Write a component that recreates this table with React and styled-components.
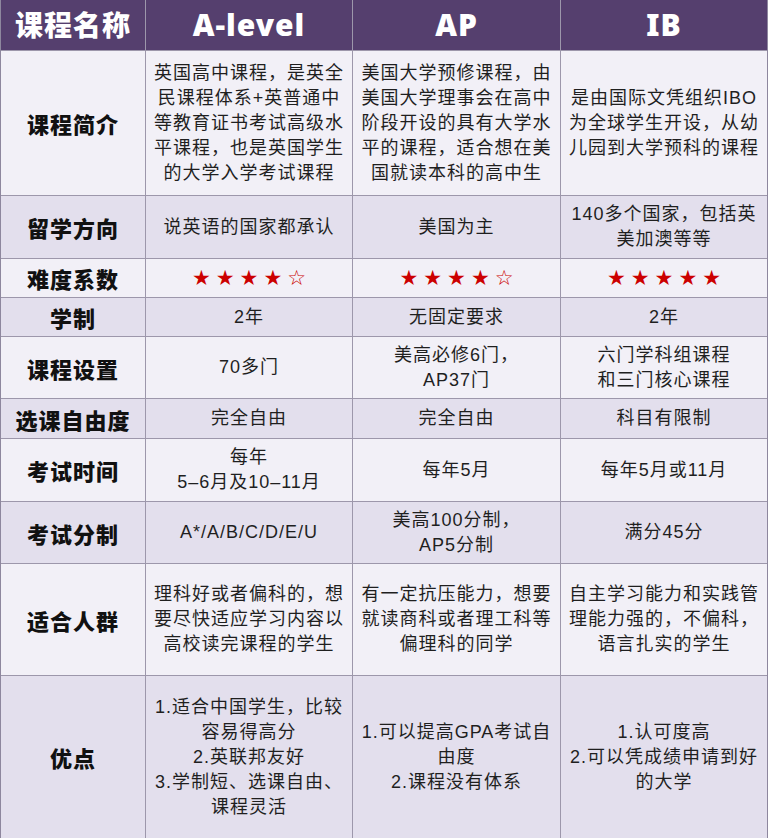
import React from "react";
import styled, { createGlobalStyle } from "styled-components";

const GlobalStyle = createGlobalStyle`
  html, body {
    margin: 0;
    padding: 0;
    background: #ffffff;
  }
  body {
    font-family: "Liberation Sans", "Noto Sans CJK SC", sans-serif;
  }
`;

const rows = [
  {
    label: "课程简介",
    height: 145,
    tone: "light",
    cells: [
      ["英国高中课程，是英全", "民课程体系+英普通中", "等教育证书考试高级水", "平课程，也是英国学生", "的大学入学考试课程"],
      ["美国大学预修课程，由", "美国大学理事会在高中", "阶段开设的具有大学水", "平的课程，适合想在美", "国就读本科的高中生"],
      ["是由国际文凭组织IBO", "为全球学生开设，从幼", "儿园到大学预科的课程"],
    ],
  },
  {
    label: "留学方向",
    height: 63,
    tone: "dark",
    cells: [["说英语的国家都承认"], ["美国为主"], ["140多个国家，包括英", "美加澳等等"]],
  },
  { label: "难度系数", height: 39, tone: "light", stars: [4, 4, 5] },
  { label: "学制", height: 39, tone: "dark", cells: [["2年"], ["无固定要求"], ["2年"]] },
  {
    label: "课程设置",
    height: 62,
    tone: "light",
    cells: [["70多门"], ["美高必修6门，", "AP37门"], ["六门学科组课程", "和三门核心课程"]],
  },
  { label: "选课自由度", height: 40, tone: "dark", cells: [["完全自由"], ["完全自由"], ["科目有限制"]] },
  {
    label: "考试时间",
    height: 63,
    tone: "light",
    cells: [["每年", "5–6月及10–11月"], ["每年5月"], ["每年5月或11月"]],
  },
  {
    label: "考试分制",
    height: 62,
    tone: "dark",
    cells: [["A*/A/B/C/D/E/U"], ["美高100分制，", "AP5分制"], ["满分45分"]],
  },
  {
    label: "适合人群",
    height: 112,
    tone: "light",
    cells: [
      ["理科好或者偏科的，想", "要尽快适应学习内容以", "高校读完课程的学生"],
      ["有一定抗压能力，想要", "就读商科或者理工科等", "偏理科的同学"],
      ["自主学习能力和实践管", "理能力强的，不偏科，", "语言扎实的学生"],
    ],
  },
  {
    label: "优点",
    height: 163,
    tone: "dark",
    cells: [
      ["1.适合中国学生，比较", "容易得高分", "2.英联邦友好", "3.学制短、选课自由、", "课程灵活"],
      ["1.可以提高GPA考试自", "由度", "2.课程没有体系"],
      ["1.认可度高", "2.可以凭成绩申请到好", "的大学"],
    ],
  },
];

const Page = styled.div`
  width: 768px;
  height: 838px;
  overflow: hidden;
  background: #ffffff;
`;

const Table = styled.div`
  display: grid;
  width: 766px;
  grid-template-columns: 144px 206px 207px 206px;
  grid-template-rows: 50px ${(p) => p.$rows};
  column-gap: 1px;
  row-gap: 1px;
  background: #9d97ab;
  border-left: 1px solid #8e879e;
  border-right: 1px solid #8e879e;
`;

const HeadCell = styled.div`
  display: flex;
  align-items: center;
  justify-content: center;
  background: #553f6e;
  color: #ffffff;
  font-family: "Noto Sans", "Noto Sans CJK SC", sans-serif;
  font-weight: 900;
  font-size: ${(p) => (p.$cjk ? "28px" : "30px")};
  letter-spacing: 1px;
  padding-bottom: 2px;
`;

const LabelCell = styled.div`
  display: flex;
  align-items: center;
  justify-content: center;
  background: ${(p) => (p.$tone === "dark" ? "#e3dfed" : "#f2f0f7")};
  color: #111111;
  font-family: "Noto Sans CJK SC", sans-serif;
  font-weight: 900;
  font-size: 22px;
  letter-spacing: 1px;
`;

const Cell = styled.div`
  display: flex;
  flex-direction: column;
  align-items: center;
  justify-content: center;
  background: ${(p) => (p.$tone === "dark" ? "#e3dfed" : "#f2f0f7")};
  color: #1f1f1f;
  font-family: "Liberation Sans", "Noto Sans CJK SC", sans-serif;
  font-size: 18px;
  line-height: 25px;
  letter-spacing: 1px;
`;

const Line = styled.span`
  white-space: nowrap;
`;

const Stars = styled.span`
  font-family: "DejaVu Sans", sans-serif;
  font-size: 21px;
  letter-spacing: 5px;
  color: #cc0000;
  white-space: nowrap;
  margin-right: -5px;
`;

const headers = [
  { text: "课程名称", cjk: true },
  { text: "A-level" },
  { text: "AP" },
  { text: "IB" },
];

export default function App() {
  return (
    <Page>
      <GlobalStyle />
      <Table $rows={rows.map((r) => `${r.height - 1}px`).join(" ")}>
        {headers.map((h) => (
          <HeadCell key={h.text} $cjk={h.cjk}>
            {h.text}
          </HeadCell>
        ))}
        {rows.map((row) => (
          <React.Fragment key={row.label}>
            <LabelCell $tone={row.tone}>{row.label}</LabelCell>
            {row.stars
              ? row.stars.map((n, i) => (
                  <Cell key={i} $tone={row.tone}>
                    <Stars>{"★".repeat(n) + "☆".repeat(5 - n)}</Stars>
                  </Cell>
                ))
              : row.cells.map((lines, i) => (
                  <Cell key={i} $tone={row.tone}>
                    {lines.map((l) => (
                      <Line key={l}>{l}</Line>
                    ))}
                  </Cell>
                ))}
          </React.Fragment>
        ))}
      </Table>
    </Page>
  );
}
